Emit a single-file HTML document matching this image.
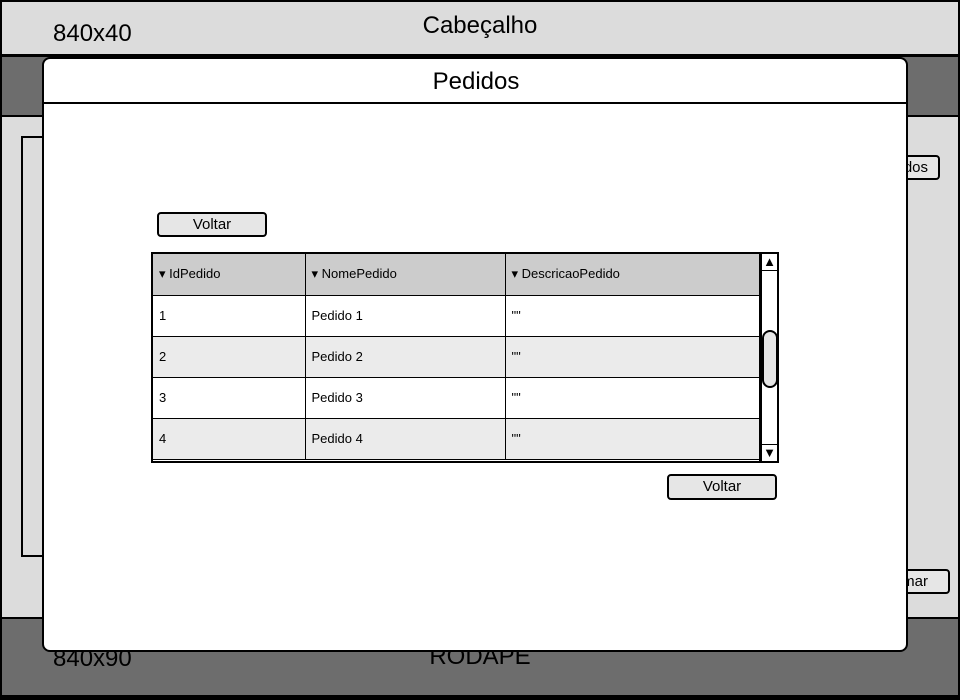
<!DOCTYPE html>
<html><head><meta charset="utf-8"><style>
*{box-sizing:border-box;margin:0;padding:0}
body{width:960px;height:700px;position:relative;background:#fff;font-family:"Liberation Sans",sans-serif;overflow:hidden}
.a{position:absolute}
.btn{position:absolute;background:#e6e6e6;border:2px solid #000;border-radius:4px;font-size:15px;text-align:center;color:#000}
td{border-bottom:1px solid #000;font-size:13px;padding-left:6px;height:41px}
</style></head><body>
<div class="a" style="left:0;top:0;width:960px;height:700px;background:#dcdcdc;border:2px solid #000"></div>
<div class="a" style="left:2px;top:0;width:956px;height:57px;background:#dcdcdc;border-bottom:3px solid #000;border-top:2px solid #000"></div>
<div class="a" style="left:53px;top:20px;font-size:24px">840x40</div>
<div class="a" style="left:0;top:12px;width:960px;text-align:center;font-size:24px">Cabeçalho</div>
<div class="a" style="left:2px;top:57px;width:956px;height:60px;background:#6d6d6d;border-bottom:2px solid #000"></div>
<div class="a" style="left:21px;top:136px;width:40px;height:421px;border:2px solid #000;background:#dcdcdc"></div>
<div class="btn" style="left:860px;top:155px;width:80px;height:25px;line-height:21px;text-align:right;padding-right:10px">dos</div>
<div class="btn" style="left:860px;top:569px;width:90px;height:25px;line-height:21px;text-align:right;padding-right:20px">mar</div>
<div class="a" style="left:2px;top:617px;width:956px;height:81px;background:#6d6d6d;border-top:2px solid #000;border-bottom:3px solid #000"></div>
<div class="a" style="left:53px;top:645px;font-size:24px">840x90</div>
<div class="a" style="left:0;top:643px;width:960px;text-align:center;font-size:24px">RODAPE</div>
<div class="a" style="left:42px;top:57px;width:866px;height:595px;background:#fff;border:2px solid #000;border-radius:8px"></div>
<div class="a" style="left:43px;top:102px;width:864px;height:2px;background:#000"></div>
<div class="a" style="left:0;top:68px;width:952px;text-align:center;font-size:24px">Pedidos</div>
<div class="btn" style="left:157px;top:212px;width:110px;height:25px;line-height:21px">Voltar</div>
<div class="btn" style="left:667px;top:474px;width:110px;height:26px;line-height:22px">Voltar</div>
<div class="a" style="left:151px;top:252px;width:628px;height:211px;border:2px solid #000;background:#fff;overflow:hidden">
<table style="border-collapse:collapse;width:608px">
<tr style="background:#ccc"><td style="width:152px;border-right:1px solid #000">▾ IdPedido</td><td style="width:200px;border-right:1px solid #000">▾ NomePedido</td><td>▾ DescricaoPedido</td></tr>
<tr><td style="border-right:1px solid #000">1</td><td style="border-right:1px solid #000">Pedido 1</td><td>""</td></tr>
<tr style="background:#ebebeb"><td style="border-right:1px solid #000">2</td><td style="border-right:1px solid #000">Pedido 2</td><td>""</td></tr>
<tr><td style="border-right:1px solid #000">3</td><td style="border-right:1px solid #000">Pedido 3</td><td>""</td></tr>
<tr style="background:#ebebeb"><td style="border-right:1px solid #000">4</td><td style="border-right:1px solid #000">Pedido 4</td><td>""</td></tr>
</table>
<div class="a" style="left:606px;top:0;width:18px;height:207px;border-left:3px solid #000;background:#fff"></div>
<div class="a" style="left:609px;top:0;width:15px;height:17px;border-bottom:1px solid #000;font-size:13px;text-align:center;line-height:16px">▲</div>
<div class="a" style="left:609px;top:190px;width:15px;height:17px;border-top:1px solid #000;font-size:13px;text-align:center;line-height:16px">▼</div>
<div class="a" style="left:609px;top:76px;width:16px;height:58px;background:#e6e6e6;border:2px solid #000;border-radius:8px"></div>
</div>
</body></html>
